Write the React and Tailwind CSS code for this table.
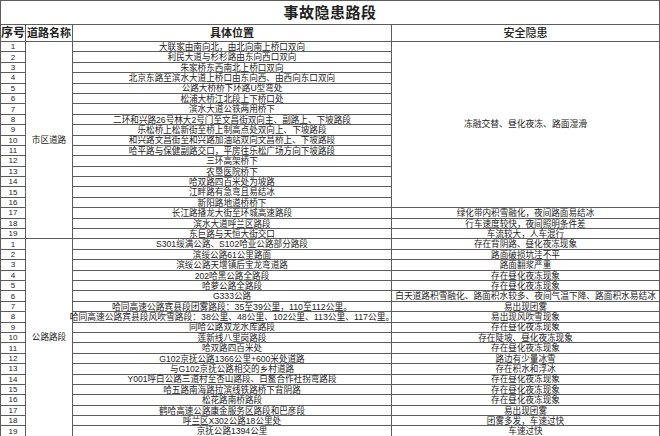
import React from "react";

// 市区道路 rows: the location of each spot
const cityRows = [
  "大联家由南向北，由北向南上桥口双向",
  "利民大道与杉杉路由东向西口双向",
  "朱家桥东西南北上桥口双向",
  "北京东路至滨水大道上桥口由东向西、由西向东口双向",
  "公路大桥桥下环路U型弯处",
  "松浦大桥江北段上下桥口处",
  "滨水大道公铁两用桥下",
  "二环和兴路26号林大2号门至文昌街双向主、副路上、下坡路段",
  "乐松桥上松新街至桥上制高点处双向上、下坡路段",
  "和兴路文昌街至和兴路加油站双向文昌桥上、下坡路段",
  "哈平路与保健副路交口，平房往乐松广场方向下坡路段",
  "三环高架桥下",
  "农垦医院桥下",
  "哈双路四百米处为坡路",
  "江畔路有急弯且易结冰",
  "新阳路地道桥桥下",
  "长江路播龙大街至环城高速路段",
  "滨水大道呼兰区路段",
  "东巨路与天恒大街交口",
];

// rows 1-16 share one merged hazard cell
const cityHazards = {
  17: "绿化带内积雪融化，夜间路面易结冰",
  18: "行车速度较快，夜间照明条件差",
  19: "车流较大，人车混行",
};

const highwayRows = [
  ["S301绥满公路、S102哈亚公路部分路段", "存在背阴路、昼化夜冻现象"],
  ["滨绥公路61公里路面", "路面破损坑洼不平"],
  ["滨绥公路天增镇后宝龙弯道路", "路面翻浆严重"],
  ["202哈黑公路全路段", "存在昼化夜冻现象"],
  ["哈萝公路全路段", "存在昼化夜冻现象"],
  ["G333公路", "白天道路积雪融化、路面积水较多、夜间气温下降、路面积水易结冰"],
  ["哈同高速公路宾县段团雾路段：35至39公里，110至112公里。", "易出现团雾"],
  ["哈同高速公路宾县段风吹雪路段：38公里、48公里、102公里、113公里、117公里。", "易出现风吹雪现象"],
  ["同哈公路双龙水库路段", "存在昼化夜冻现象"],
  ["莲新线八里岗路段", "存在陡坡、昼化夜冻现象"],
  ["哈双路四百米处", "存在昼化夜冻现象"],
  ["G102京抚公路1366公里+600米处道路", "路边有少量冰雪"],
  ["与G102京抚公路相交的乡村道路", "存在积水和浮冰"],
  ["Y001呼白公路三道村至杏山路段、白鳌合作社拐弯路段", "存在昼化夜冻现象"],
  ["哈五路南海路拉滨线铁路桥下背阴路", "存在昼化夜冻现象"],
  ["松花路南桥路段", "存在昼化夜冻现象"],
  ["鹤哈高速公路康金服务区路段和巴彦段", "易出现团雾"],
  ["呼兰区X302公路18公里处", "团雾多发，车速过快"],
  ["京抚公路1394公里", "车速过快"],
];

const cell = "border-r border-b border-[#5c5c5c] flex items-center justify-center whitespace-nowrap leading-none";

function NumCell({ n }) {
  return <div className={`${cell} col-start-1 text-[8px] pt-[1px]`}>{n}</div>;
}

export default function App() {
  return (
    <div className="w-[660px] h-[436px] bg-white text-[#222] font-['Liberation_Sans','Noto_Sans_CJK_SC',sans-serif] overflow-hidden">
      <div className="grid grid-cols-[25px_47px_319px_268px] grid-rows-[24px_17px_repeat(38,10.4px)] border-l border-t border-[#5c5c5c]">
        {/* Title */}
        <div className={`${cell} col-span-4 text-[15px] font-bold tracking-[0.5px]`}>事故隐患路段</div>

        {/* Header */}
        <div className={`${cell} text-[12px] font-bold`}>序号</div>
        <div className={`${cell} text-[11px] font-bold`}>道路名称</div>
        <div className={`${cell} text-[11px] font-bold`}>具体位置</div>
        <div className={`${cell} text-[11px] font-medium`}>安全隐患</div>

        {/* 市区道路 */}
        {cityRows.map((loc, i) => {
          const n = i + 1;
          return (
            <React.Fragment key={`c${n}`}>
              <NumCell n={n} />
              {n === 1 && (
                <div className={`${cell} col-start-2 row-[span_19/span_19] text-[8.6px]`}>市区道路</div>
              )}
              <div className={`${cell} col-start-3 text-[8.6px] pt-[1px]`}>{loc}</div>
              {n === 1 && (
                <div className={`${cell} col-start-4 row-[span_16/span_16] text-[8.8px]`}>冻融交替、昼化夜冻、路面湿滑</div>
              )}
              {cityHazards[n] && (
                <div className={`${cell} col-start-4 text-[8.6px] pt-[1px]`}>{cityHazards[n]}</div>
              )}
            </React.Fragment>
          );
        })}

        {/* 公路路段 */}
        {highwayRows.map(([loc, hazard], i) => {
          const n = i + 1;
          const wide = n === 7 || n === 8;
          return (
            <React.Fragment key={`h${n}`}>
              <NumCell n={n} />
              {n === 1 && (
                <div className={`${cell} col-start-2 row-[span_19/span_19] text-[8.6px]`}>公路路段</div>
              )}
              <div className={`${cell} col-start-3 ${wide ? "text-[8.75px]" : "text-[8.6px]"} pt-[1px]`}>{loc}</div>
              <div className={`${cell} col-start-4 ${n === 6 ? "text-[8.7px]" : "text-[8.6px]"} pt-[1px]`}>{hazard}</div>
            </React.Fragment>
          );
        })}
      </div>
    </div>
  );
}
